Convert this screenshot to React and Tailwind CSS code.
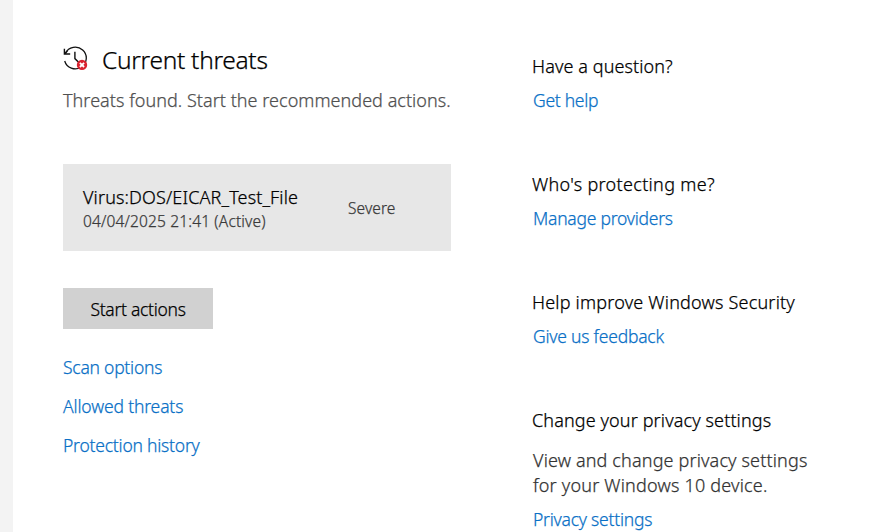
function HistoryAlertIcon() {
  return (
    <svg width="26" height="26" viewBox="0 0 26 26" fill="none" className="shrink-0">
      <path d="M2.4 7.2A11 10.9 0 1 1 1.7 15" stroke="#111" strokeWidth="1.3" />
      <path d="M1.4 2.8V8H7.2M1.4 8L4.4 5" stroke="#111" strokeWidth="1.4" />
      <path d="M11.9 5.8V12.6L15.6 16.2" stroke="#111" strokeWidth="1.4" />
      <circle cx="19" cy="18.9" r="5.2" fill="#d9222f" />
      <path d="M16.9 16.8L21.1 21M21.1 16.8L16.9 21" stroke="#fff" strokeWidth="1.8" />
    </svg>
  );
}

function Link({ className, children }) {
  return <a className={`block text-[17.5px] leading-6 text-[#0a70c6] ${className}`}>{children}</a>;
}

function Section({ title, titleClass, children }) {
  return (
    <section className="h-[118px]">
      <h2 className={`text-[18px] leading-6 text-black -ml-px ${titleClass}`}>{title}</h2>
      {children}
    </section>
  );
}

export default function App() {
  return (
    <div className="flex h-[532px] w-[886px] overflow-hidden whitespace-nowrap bg-white font-['Noto_Sans',sans-serif] font-light [-webkit-text-stroke:0.25px]">
      <aside className="w-[13px] shrink-0 bg-[#f3f3f3]" />
      <main className="ml-[50px] w-[388px] shrink-0 pt-11">
        <header className="flex h-8 items-start">
          <div className="pt-0.5"><HistoryAlertIcon /></div>
          <h1 className="ml-[13px] text-[24.5px] leading-8 tracking-[-0.3px] text-black">Current threats</h1>
        </header>
        <p className="mt-3 text-[18px] leading-6 tracking-[0.04px] text-[#505050]">Threats found. Start the recommended actions.</p>
        <div className="mt-[52px] flex h-[87px] bg-[#e7e7e7] pl-5">
          <div className="w-[265px] pt-[21px]">
            <div className="text-[18px] leading-6 tracking-[0.13px] text-black">Virus:DOS/EICAR_Test_File</div>
            <div className="text-[15.5px] leading-6 tracking-[0.15px] text-[#3a3a3a]">04/04/2025 21:41 (Active)</div>
          </div>
          <div className="pt-8 text-[15.5px] leading-6 tracking-[0.1px] text-[#3a3a3a]">Severe</div>
        </div>
        <button className="mt-[37px] flex h-[41px] w-[150px] items-center justify-center pt-px bg-[#d1d1d1] text-[17.5px] tracking-[-0.29px] text-black">Start actions</button>
        <nav className="mt-[26px] flex flex-col gap-[15px]">
          <Link className="tracking-[-0.24px]">Scan options</Link>
          <Link className="tracking-[-0.15px]">Allowed threats</Link>
          <Link className="tracking-[-0.22px]">Protection history</Link>
        </nav>
      </main>
      <aside className="ml-[82px] pt-[54px]">
        <Section title="Have a question?" titleClass="tracking-[0.1px]">
          <Link className="mt-2.5 tracking-[-0.28px]">Get help</Link>
        </Section>
        <Section title="Who's protecting me?" titleClass="tracking-[0.32px]">
          <Link className="mt-2.5 tracking-[-0.24px]">Manage providers</Link>
        </Section>
        <Section title="Help improve Windows Security" titleClass="tracking-[0.2px]">
          <Link className="mt-2.5 tracking-[-0.22px]">Give us feedback</Link>
        </Section>
        <Section title="Change your privacy settings" titleClass="tracking-[0.12px]">
          <p className="mt-4 text-[18px] leading-[25px] text-[#333]">
            <span className="block tracking-[0.15px]">View and change privacy settings</span>
            <span className="block tracking-[0.2px]">for your Windows 10 device.</span>
          </p>
          <Link className="mt-[9px] tracking-[-0.23px]">Privacy settings</Link>
        </Section>
      </aside>
    </div>
  );
}
